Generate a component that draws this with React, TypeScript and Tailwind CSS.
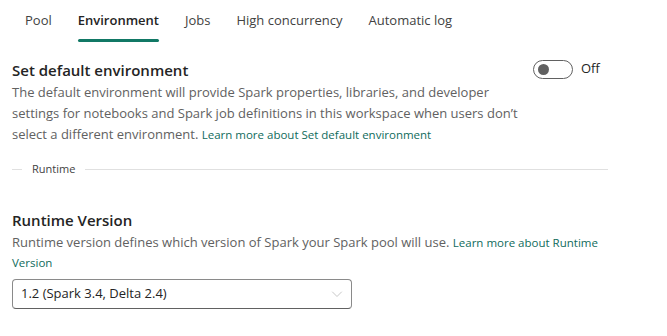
import React from "react";

export default function App() {
  const tabs = ["Pool", "Environment", "Jobs", "High concurrency", "Automatic log"];
  return (
    <div className="w-[667px] h-[336px] bg-white overflow-hidden font-['Open_Sans',sans-serif] text-[#242424]">
      {/* Tabs */}
      <div className="flex items-start pl-[25px] gap-[26px] pt-[9px] h-[44px]">
        {tabs.map((t) => {
          const active = t === "Environment";
          return (
            <div key={t} className="flex flex-col items-stretch">
              <span
                className={
                  active
                    ? "text-[13px] leading-[22px] font-semibold text-[#242424]"
                    : "text-[13px] leading-[22px] text-[#424242]"
                }
              >
                {t}
              </span>
              <div className={active ? "mt-[8px] h-[3px] rounded-full bg-[#117865]" : "mt-[8px] h-[3px]"} />
            </div>
          );
        })}
      </div>

      {/* Set default environment */}
      <div className="pl-[12px] pt-[14px] flex">
        <div className="w-[521px]">
          <div className="text-[15px] leading-[24px] font-semibold text-[#242424]">Set default environment</div>
          <p className="text-[13px] leading-[21px] text-[#616161]">
            The default environment will provide Spark properties, libraries, and developer settings for notebooks and
            Spark job definitions in this workspace when users don’t select a different environment.{" "}
            <a className="text-[11.5px] leading-[16px] text-[#0f6b5c]">Learn more about Set default environment</a>
          </p>
        </div>
        <div className="flex items-center gap-[8px] h-[20px] mt-[1px]">
          <div className="w-[40px] h-[19px] rounded-full border border-[#616161] flex items-center pl-[4px]">
            <div className="w-[11px] h-[11px] rounded-full bg-[#616161]" />
          </div>
          <span className="text-[13px] text-[#242424]">Off</span>
        </div>
      </div>

      {/* Divider */}
      <div className="pl-[12px] mt-[16px] flex items-center w-[608px]">
        <div className="w-[10px] h-px bg-[#e0e0e0]" />
        <span className="px-[10px] text-[11px] leading-[16px] text-[#424242]">Runtime</span>
        <div className="flex-1 h-px bg-[#e0e0e0]" />
      </div>

      {/* Runtime version */}
      <div className="pl-[12px] pt-[31px] w-[608px]">
        <div className="text-[15px] leading-[24px] font-semibold text-[#242424]">Runtime Version</div>
        <p className="text-[13px] leading-[20px] text-[#616161]">
          Runtime version defines which version of Spark your Spark pool will use.{" "}
          <a className="text-[11.5px] leading-[16px] text-[#0f6b5c]">Learn more about Runtime Version</a>
        </p>
        <div className="mt-[7px] w-[340px] h-[30px] rounded-[4px] border border-[#8a8a8a] border-b-[#616161] flex items-center justify-between pl-[8px] pr-[8px]">
          <span className="text-[13px] text-[#242424]">1.2 (Spark 3.4, Delta 2.4)</span>
          <svg width="12" height="12" viewBox="0 0 12 12" fill="none">
            <path d="M1.5 4l4.5 4.5L10.5 4" stroke="#c8c8c8" strokeWidth="1" strokeLinecap="round" strokeLinejoin="round" />
          </svg>
        </div>
      </div>
    </div>
  );
}
